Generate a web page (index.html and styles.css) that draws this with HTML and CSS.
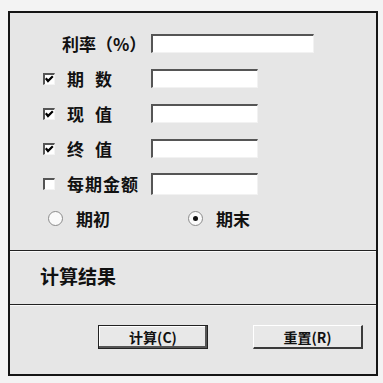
FILE: index.html
```html
<!DOCTYPE html>
<html lang="zh-CN">
<head>
<meta charset="utf-8">
<title>利率计算</title>
<link rel="stylesheet" href="styles.css">
</head>
<body>
<div class="dialog">
  <div class="form">
    <div class="row rate">
      <span class="label wide">利率（%）</span>
      <span class="input long"></span>
    </div>
    <div class="row">
      <span class="check on"><svg viewBox="0 0 12 12" width="12" height="12"><path d="M2.8 5.2 L5 8 L9.8 3.2" fill="none" stroke="#000" stroke-width="2.2"/></svg></span>
      <span class="label spaced">期数</span>
      <span class="input"></span>
    </div>
    <div class="row">
      <span class="check on"><svg viewBox="0 0 12 12" width="12" height="12"><path d="M2.8 5.2 L5 8 L9.8 3.2" fill="none" stroke="#000" stroke-width="2.2"/></svg></span>
      <span class="label spaced">现值</span>
      <span class="input"></span>
    </div>
    <div class="row">
      <span class="check on"><svg viewBox="0 0 12 12" width="12" height="12"><path d="M2.8 5.2 L5 8 L9.8 3.2" fill="none" stroke="#000" stroke-width="2.2"/></svg></span>
      <span class="label spaced">终值</span>
      <span class="input"></span>
    </div>
    <div class="row">
      <span class="check"></span>
      <span class="label loose">每期金额</span>
      <span class="input tall"></span>
    </div>
    <div class="row radios">
      <span class="radio-item first"><span class="radio"></span><span class="label">期初</span></span>
      <span class="radio-item"><span class="radio on"></span><span class="label">期末</span></span>
    </div>
  </div>
  <div class="result">计算结果</div>
  <div class="buttons">
    <span class="btn default">计算(C)</span>
    <span class="btn">重置(R)</span>
  </div>
</div>
</body>
</html>
```

FILE: styles.css
```css
html, body {
  margin: 0;
  padding: 0;
  background: #f3f3f3;
  font-family: "Noto Sans CJK SC", "Liberation Sans", sans-serif;
  color: #111;
}

.dialog {
  box-sizing: border-box;
  margin: 11px 0 0 8px;
  width: 370px;
  height: 365px;
  border: 2px solid #151515;
  background: #e6e6e6;
  display: flex;
  flex-direction: column;
}

.form {
  box-sizing: border-box;
  height: 238px;
  padding-top: 13px;
  border-bottom: 1px solid #222;
}

.row {
  display: flex;
  align-items: center;
  height: 35px;
  padding-left: 33px;
}

.row.rate {
  padding-left: 52px;
}

.label {
  font-size: 17px;
  font-weight: 700;
  line-height: 1;
  white-space: nowrap;
}

.row .label {
  width: 84px;
}

.row .label.wide {
  width: 89px;
}

.label.spaced {
  letter-spacing: 11px;
}

.label.loose {
  letter-spacing: 1px;
}

.check {
  box-sizing: border-box;
  width: 12px;
  height: 12px;
  margin-right: 12px;
  background: #fff;
  border-top: 2px solid #555;
  border-left: 2px solid #555;
  border-right: 1px solid #f4f4f4;
  border-bottom: 1px solid #f4f4f4;
  position: relative;
}

.check svg {
  position: absolute;
  left: -2px;
  top: -2px;
}

.input {
  box-sizing: border-box;
  width: 107px;
  height: 19px;
  background: #fff;
  border-top: 2px solid #555;
  border-left: 2px solid #555;
  border-right: 1px solid #f2f2f2;
  border-bottom: 1px solid #f2f2f2;
}

.input.long {
  width: 163px;
}

.input.tall {
  height: 22px;
}

.row.radios {
  padding-left: 38px;
}

.radio-item {
  display: flex;
  align-items: center;
  gap: 13px;
}

.radio-item.first {
  width: 140px;
}

.radio-item .label {
  width: auto;
}

.radio {
  box-sizing: border-box;
  width: 15px;
  height: 15px;
  border-radius: 50%;
  border: 1px solid #8a8a8a;
  background: #fafafa;
  position: relative;
}

.radio.on::after {
  content: "";
  position: absolute;
  left: 4px;
  top: 4px;
  width: 5px;
  height: 5px;
  border-radius: 50%;
  background: #111;
}

.result {
  box-sizing: border-box;
  height: 54px;
  border-top: 1px solid #fafafa;
  border-bottom: 1px solid #222;
  padding: 0 0 6px 30px;
  display: flex;
  align-items: center;
  font-size: 19px;
  font-weight: 700;
}

.buttons {
  flex: 1;
  border-top: 1px solid #fafafa;
  display: flex;
  align-items: flex-start;
  padding: 19px 0 0 88px;
  gap: 45px;
}

.btn {
  box-sizing: border-box;
  width: 110px;
  height: 24px;
  display: flex;
  align-items: center;
  justify-content: center;
  font-size: 14px;
  font-weight: 700;
  background: #e8e8e8;
  border-top: 1px solid #fff;
  border-left: 1px solid #fff;
  border-right: 2px solid #3a3a3a;
  border-bottom: 2px solid #3a3a3a;
}

.btn.default {
  border: 1px solid #222;
  box-shadow: inset -2px -2px 0 #555, inset 1px 1px 0 #fff;
}
```
